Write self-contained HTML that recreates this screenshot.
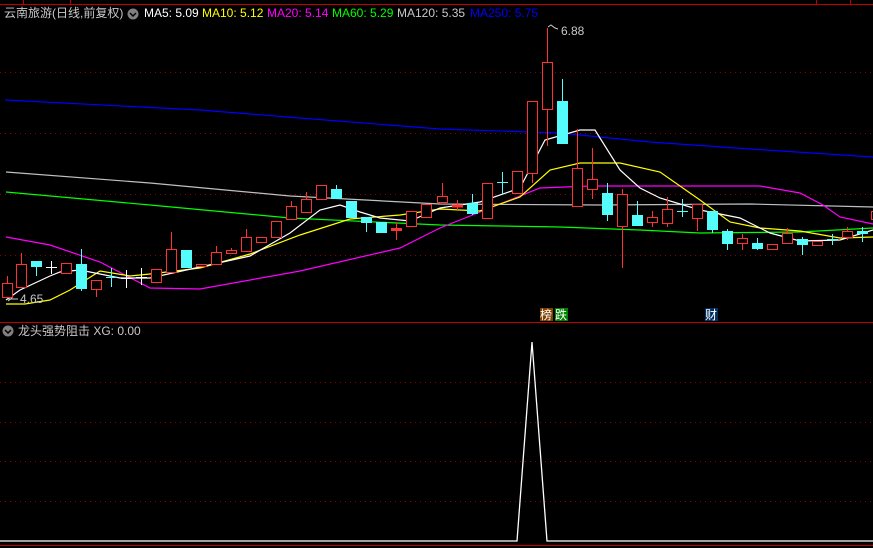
<!DOCTYPE html>
<html><head><meta charset="utf-8"><style>
html,body{margin:0;padding:0;background:#000;width:873px;height:548px;overflow:hidden}
svg{display:block}
text{font-family:"Liberation Sans","Noto Sans CJK SC",sans-serif;font-size:12px}
</style></head><body>
<svg width="873" height="548" viewBox="0 0 873 548" xmlns="http://www.w3.org/2000/svg">
<rect width="873" height="548" fill="#000"/>
<g shape-rendering="crispEdges">
<line x1="0" y1="4.5" x2="873" y2="4.5" stroke="#c00000" stroke-width="1"/>
<line x1="23.5" y1="0" x2="23.5" y2="4" stroke="#c00000"/>
<line x1="70.5" y1="0" x2="70.5" y2="4" stroke="#c00000"/>
<line x1="816.5" y1="0" x2="816.5" y2="4" stroke="#c00000"/>
<line x1="850.5" y1="0" x2="850.5" y2="4" stroke="#c00000"/>
<line x1="0" y1="322.5" x2="873" y2="322.5" stroke="#c00000" stroke-width="1.2"/>
<line x1="0" y1="545.5" x2="873" y2="545.5" stroke="#c00000"/>
</g>
<g stroke="#8a0000" stroke-dasharray="1,4" stroke-width="1" shape-rendering="crispEdges">
<line x1="0" y1="72.5" x2="873" y2="72.5"/>
<line x1="0" y1="133.5" x2="873" y2="133.5"/>
<line x1="0" y1="194.5" x2="873" y2="194.5"/>
<line x1="0" y1="255.5" x2="873" y2="255.5"/>
<line x1="0" y1="382.5" x2="873" y2="382.5"/>
<line x1="0" y1="422.5" x2="873" y2="422.5"/>
<line x1="0" y1="461.5" x2="873" y2="461.5"/>
<line x1="0" y1="501.5" x2="873" y2="501.5"/>
</g>
<text x="4" y="17" fill="#c8c8c8">云南旅游(日线,前复权)</text>
<circle cx="133" cy="14" r="5.5" fill="#808080"/>
<path d="M130 13 L133 16 L136 13" stroke="#000" stroke-width="1.5" fill="none"/>
<text x="144" y="17" fill="#fff">MA5: 5.09</text>
<text x="202" y="17" fill="#ffff00">MA10: 5.12</text>
<text x="267" y="17" fill="#ff00ff">MA20: 5.14</text>
<text x="332" y="17" fill="#00ff00">MA60: 5.29</text>
<text x="397" y="17" fill="#c8c8c8">MA120: 5.35</text>
<text x="470" y="17" fill="#0000ff">MA250: 5.75</text>
<g fill="none" stroke-width="1.2">
<polyline stroke="#0000ff" points="5,100 200,110 300,118 440,129 560,133 650,142 750,149 873,157"/>
<polyline stroke="#c0c0c0" points="6,172 150,183 290,196 440,204 600,205 750,204 873,207"/>
<polyline stroke="#00ff00" points="6,192 150,205 290,218 440,225 560,227 640,230 700,233 800,232 873,228"/>
<polyline stroke="#ff00ff" points="6,237 50,245 100,262 150,288 200,289 300,271 400,248 440,228 480,212 540,188 590,186 700,186 760,186 800,193 823,205 840,217 873,224"/>
<polyline stroke="#ffff00" points="6,304 25,304 50,300 70,290 100,271 130,276 150,274 200,268 250,254 300,235 350,219 400,215 440,209 480,211 520,197 550,170 580,163 620,163 660,172 700,200 730,222 760,228 800,231 840,238 873,237"/>
<polyline stroke="#ffffff" points="6,300 20,290 50,276 60,272 80,270 120,278 150,278 200,267 250,256 290,233 320,210 340,205 360,212 380,218 410,221 440,208 480,202 520,188 545,140 580,130 595,130 620,170 640,188 660,198 700,210 740,218 770,233 800,241 840,240 873,230"/>
</g>
<g stroke="#ff3232" fill="#000" stroke-width="1" shape-rendering="crispEdges">
<line x1="7.5" y1="276" x2="7.5" y2="283"/><rect x="2.5" y="283.5" width="10" height="14"/>
<line x1="21.5" y1="253" x2="21.5" y2="264"/><rect x="16.5" y="264.5" width="10" height="23"/>
<rect x="61.5" y="263.5" width="10" height="10"/>
<line x1="96.5" y1="289" x2="96.5" y2="297"/><rect x="91.5" y="280.5" width="10" height="9"/>
<rect x="151.5" y="269.5" width="10" height="13"/>
<line x1="171.5" y1="232" x2="171.5" y2="249"/><rect x="166.5" y="249.5" width="10" height="23"/>
<rect x="196.5" y="264.5" width="10" height="2"/>
<line x1="216.5" y1="246" x2="216.5" y2="252"/><rect x="211.5" y="252.5" width="10" height="12"/>
<line x1="231.5" y1="248" x2="231.5" y2="250"/><rect x="226.5" y="250.5" width="10" height="3"/>
<line x1="246.5" y1="229" x2="246.5" y2="237"/><rect x="241.5" y="237.5" width="10" height="14"/>
<rect x="256.5" y="237.5" width="10" height="5"/>
<rect x="271.5" y="221.5" width="10" height="16"/>
<line x1="291.5" y1="201" x2="291.5" y2="206"/><rect x="286.5" y="206.5" width="10" height="13"/>
<line x1="306.5" y1="192" x2="306.5" y2="199"/><rect x="301.5" y="199.5" width="10" height="13"/>
<rect x="316.5" y="185.5" width="10" height="14"/>
<line x1="396.5" y1="222" x2="396.5" y2="240"/><rect x="391.5" y="228.5" width="10" height="2" fill="#ff3232"/>
<rect x="406.5" y="211.5" width="10" height="15"/>
<rect x="421.5" y="204.5" width="10" height="13"/>
<line x1="442.5" y1="183" x2="442.5" y2="196"/><rect x="437.5" y="196.5" width="10" height="6"/>
<line x1="457.5" y1="200" x2="457.5" y2="210"/><rect x="452.5" y="205" width="10" height="2" fill="#ff3232"/>
<rect x="482.5" y="183.5" width="10" height="35"/>
<rect x="512.5" y="171.5" width="10" height="22"/>
<line x1="532.5" y1="173" x2="532.5" y2="183"/><rect x="527.5" y="101.5" width="10" height="72"/>
<line x1="547.5" y1="28" x2="547.5" y2="62"/><line x1="547.5" y1="109" x2="547.5" y2="146"/><rect x="542.5" y="62.5" width="10" height="47"/>
<line x1="577.5" y1="129" x2="577.5" y2="168"/><rect x="572.5" y="168.5" width="10" height="38"/>
<line x1="592.5" y1="148" x2="592.5" y2="199"/><rect x="587.5" y="179.5" width="10" height="10"/>
<line x1="622.5" y1="189" x2="622.5" y2="268"/><rect x="617.5" y="194.5" width="10" height="32"/>
<line x1="652.5" y1="211" x2="652.5" y2="227"/><rect x="647.5" y="217.5" width="10" height="5"/>
<line x1="667.5" y1="197" x2="667.5" y2="227"/><rect x="662.5" y="209.5" width="10" height="14"/>
<line x1="697.5" y1="218" x2="697.5" y2="231"/><rect x="692.5" y="204.5" width="10" height="14"/>
<line x1="742.5" y1="234" x2="742.5" y2="250"/><rect x="737.5" y="238.5" width="10" height="5"/>
<rect x="767.5" y="244.5" width="10" height="5"/>
<line x1="787.5" y1="228" x2="787.5" y2="233"/><rect x="782.5" y="233.5" width="10" height="10"/>
<rect x="812.5" y="241.5" width="10" height="4"/>
<line x1="847.5" y1="227" x2="847.5" y2="240"/><rect x="842.5" y="231.5" width="10" height="6"/>
<rect x="871.5" y="211.5" width="6" height="8"/>
</g>
<g stroke="#54fcfc" fill="#54fcfc" stroke-width="1" shape-rendering="crispEdges">
<line x1="36.5" y1="261" x2="36.5" y2="276"/><rect x="31.5" y="261.5" width="10" height="5"/>
<line x1="81.5" y1="249" x2="81.5" y2="291"/><rect x="76.5" y="264.5" width="10" height="24"/>
<line x1="111.5" y1="268" x2="111.5" y2="287"/><line x1="106" y1="277.5" x2="117" y2="277.5"/>
<rect x="181.5" y="250.5" width="10" height="17"/>
<line x1="336.5" y1="185" x2="336.5" y2="198"/><rect x="331.5" y="189.5" width="10" height="9"/>
<rect x="346.5" y="201.5" width="10" height="16"/>
<line x1="366.5" y1="217" x2="366.5" y2="232"/><rect x="361.5" y="217.5" width="10" height="5"/>
<rect x="376.5" y="222.5" width="10" height="10"/>
<line x1="472.5" y1="194" x2="472.5" y2="215"/><rect x="467.5" y="203.5" width="10" height="10"/>
<line x1="502.5" y1="172" x2="502.5" y2="195"/><line x1="497" y1="182.5" x2="508" y2="182.5"/>
<line x1="562.5" y1="79" x2="562.5" y2="101"/><rect x="557.5" y="101.5" width="10" height="42"/>
<line x1="607.5" y1="183" x2="607.5" y2="221"/><rect x="602.5" y="193.5" width="10" height="21"/>
<line x1="637.5" y1="201" x2="637.5" y2="215"/><rect x="632.5" y="215.5" width="10" height="10"/>
<line x1="682.5" y1="199" x2="682.5" y2="217"/><line x1="677" y1="211.5" x2="688" y2="211.5"/>
<line x1="712.5" y1="229" x2="712.5" y2="233"/><rect x="707.5" y="211.5" width="10" height="18"/>
<line x1="727.5" y1="229" x2="727.5" y2="250"/><rect x="722.5" y="231.5" width="10" height="12"/>
<line x1="757.5" y1="238" x2="757.5" y2="250"/><rect x="752.5" y="243.5" width="10" height="5"/>
<line x1="802.5" y1="237" x2="802.5" y2="255"/><rect x="797.5" y="239.5" width="10" height="5"/>
<line x1="832.5" y1="234" x2="832.5" y2="245"/><line x1="827" y1="239.5" x2="838" y2="239.5"/>
<line x1="862.5" y1="227" x2="862.5" y2="242"/><rect x="857.5" y="231.5" width="10" height="2"/>
</g>
<g stroke="#fff" stroke-width="1" shape-rendering="crispEdges">
<line x1="51.5" y1="261" x2="51.5" y2="274"/><line x1="46" y1="267.5" x2="57" y2="267.5"/>
<line x1="126.5" y1="270" x2="126.5" y2="288"/><line x1="121" y1="278.5" x2="132" y2="278.5"/>
<line x1="141.5" y1="268" x2="141.5" y2="285"/><line x1="136" y1="277.5" x2="147" y2="277.5"/>
</g>
<path d="M8 301 L12 298 M8 299 L18 299" stroke="#c8c8c8" fill="none"/>
<text x="20" y="303" fill="#c8c8c8">4.65</text>
<path d="M548 27 L551 25 L555 28 L558 29" stroke="#c8c8c8" fill="none"/>
<text x="561" y="35" fill="#c8c8c8">6.88</text>
<rect x="540" y="308" width="13" height="13" fill="#804000"/>
<text x="540" y="319" fill="#fff">榜</text>
<rect x="555" y="308" width="13" height="13" fill="#008000"/>
<text x="555" y="319" fill="#fff">跌</text>
<rect x="705" y="308" width="13" height="13" fill="#003060"/>
<text x="705" y="319" fill="#fff">财</text>
<circle cx="8" cy="331" r="5.5" fill="#808080"/>
<path d="M5 330 L8 333 L11 330" stroke="#000" stroke-width="1.5" fill="none"/>
<text x="18" y="335" fill="#c8c8c8">龙头强势阻击  XG: 0.00</text>
<polyline fill="none" stroke="#fff" stroke-width="1.3" points="0,541 517,541 532,342 547,541 873,541"/>
</svg>
</body></html>
